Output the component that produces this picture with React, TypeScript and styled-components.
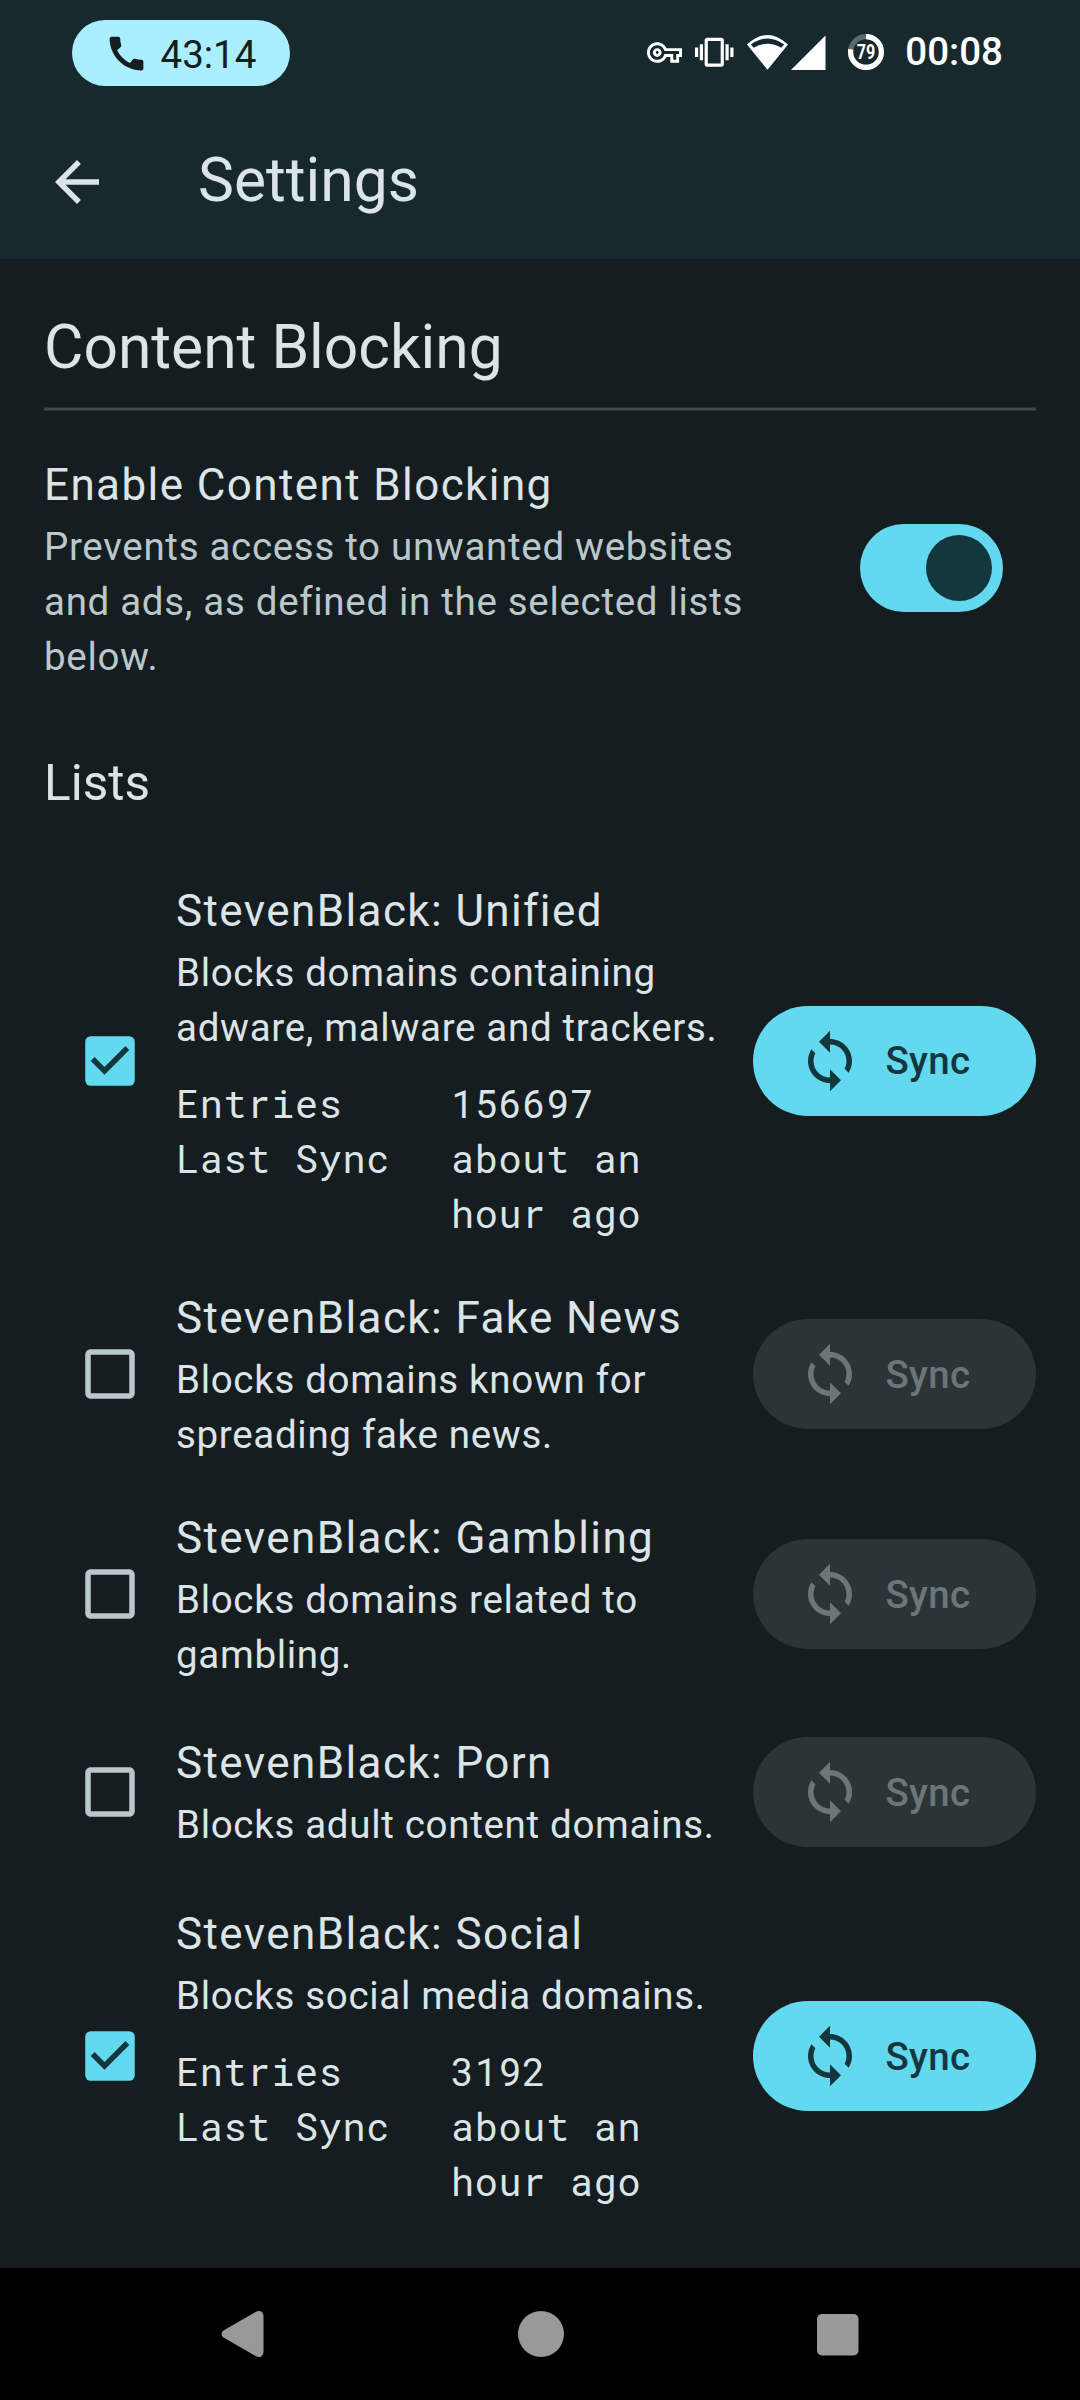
import React, { useState } from "react";
import styled, { createGlobalStyle } from "styled-components";

const color = {
  header: "#18292d",
  surface: "#161d20",
  text: "#dbe4e6",
  muted: "#bac8cb",
  divider: "#3f484a",
  dividerEdge: "#293234",
  primary: "#63d9f0",
  onPrimary: "#14363d",
  disabled: "#2c3437",
  onDisabled: "#6b7678",
  chip: "#a9efff",
  nav: "#999999",
};

const GlobalStyle = createGlobalStyle`
  * { box-sizing: border-box; }
  body { margin: 0; background: ${color.surface}; }
  button { font: inherit; border: 0; padding: 0; margin: 0; background: none; }
`;

const Screen = styled.div`
  display: flex;
  flex-direction: column;
  width: 1080px;
  height: 2400px;
  overflow: hidden;
  background: ${color.surface};
  color: ${color.text};
  font-family: Roboto, "Noto Sans", sans-serif;
`;

const StatusBar = styled.div`
  display: flex;
  align-items: center;
  justify-content: space-between;
  height: 106px;
  padding: 0 77px 0 72px;
  background: ${color.header};
`;

const CallChip = styled.div`
  display: flex;
  align-items: center;
  gap: 11.5px;
  width: 218px;
  height: 66px;
  padding-left: 32px;
  border-radius: 33px;
  background: ${color.chip};
  color: ${color.surface};
`;

const CallTime = styled.span`
  padding-top: 3px;
  font-size: 38.5px;
  line-height: 63px;
`;

const StatusIcons = styled.div`
  display: flex;
  align-items: center;
  color: #fff;
`;

const StatusGlyph = styled.svg<{ $gap: number; $lift?: number }>`
  flex: none;
  margin-right: ${(p) => p.$gap}px;
  margin-bottom: ${(p) => p.$lift ?? 0}px;
  overflow: visible;
`;

const Clock = styled.span`
  padding-bottom: 2px;
  font-size: 38.5px;
  font-weight: 500;
  line-height: 64px;
`;

const AppBar = styled.header`
  display: flex;
  align-items: center;
  gap: 88px;
  height: 153px;
  padding: 0 0 1px 44px;
  background: ${color.header};
`;

const AppTitle = styled.h1`
  margin: 0 0 3px;
  font-size: 60.5px;
  font-weight: 400;
  line-height: 77px;
`;

const Icon = styled.svg`
  flex: none;
  display: block;
  width: 66px;
  height: 66px;
  fill: currentColor;
`;

const PhoneIcon = styled(Icon)`
  width: 45px;
  height: 45px;
`;

const Content = styled.main`
  flex: 1;
  padding: 50px 44px 0;
`;

const SectionTitle = styled.h2`
  margin: 0;
  height: 98px;
  font-size: 60.5px;
  font-weight: 400;
  line-height: 77px;
`;

const Divider = styled.hr`
  height: 4px;
  margin: 0;
  border: solid ${color.dividerEdge};
  border-width: 1px 0;
  background: ${color.divider};
`;

const SettingRow = styled.div`
  display: flex;
  align-items: center;
  justify-content: space-between;
  height: 232px;
  margin-top: 41px;
  padding-right: 33px;
`;

const SettingText = styled.div`
  width: 720px;
`;

const ItemTitle = styled.div`
  font-size: 44px;
  line-height: 66px;
  letter-spacing: 1.4px;
`;

const ItemText = styled.div<{ $muted?: boolean }>`
  margin-top: 1px;
  font-size: 38.5px;
  line-height: 55px;
  letter-spacing: 0.6875px;
  color: ${(p) => (p.$muted ? color.muted : color.text)};
`;

const Switch = styled.button<{ $on: boolean }>`
  display: flex;
  align-items: center;
  justify-content: ${(p) => (p.$on ? "flex-end" : "flex-start")};
  width: 143px;
  height: 88px;
  padding: 0 11px;
  border-radius: 44px;
  background: ${(p) => (p.$on ? color.primary : color.disabled)};
`;

const SwitchThumb = styled.span`
  width: 66px;
  height: 66px;
  border-radius: 50%;
  background: ${color.onPrimary};
`;

const ListsTitle = styled.h3`
  margin: 66px 0 41px;
  font-size: 49.5px;
  font-weight: 400;
  line-height: 66px;
`;

const ListRow = styled.div`
  display: grid;
  grid-template-columns: 99px 1fr 283px;
  align-items: center;
  min-height: 176px;
  padding: 21.5px 0 21.5px 33px;
`;

const ListInfo = styled.div`
  margin: -1px 0 1px;
  padding-right: 22px;
`;

const CheckButton = styled.button<{ $checked: boolean }>`
  width: 66px;
  color: ${(p) => (p.$checked ? color.primary : color.muted)};
`;

const Stats = styled.dl`
  display: grid;
  grid-template-columns: 275px 1fr;
  margin: 21px 0 1px;
  font-family: "Roboto Mono", "DejaVu Sans Mono", monospace;
  font-size: 38.5px;
  line-height: 55px;
  letter-spacing: 0.6875px;
`;

const StatLabel = styled.dt`
  margin: 0;
`;

const StatValue = styled.dd`
  margin: 0;
`;

const SyncButton = styled.button<{ $enabled: boolean }>`
  display: flex;
  align-items: center;
  gap: 22.5px;
  width: 283px;
  height: 110px;
  padding-left: 44px;
  border-radius: 55px;
  background: ${(p) => (p.$enabled ? color.primary : color.disabled)};
  color: ${(p) => (p.$enabled ? color.onPrimary : color.onDisabled)};
  font-size: 38.5px;
  font-weight: 500;
  line-height: 55px;
  letter-spacing: 0.275px;
`;

const NavBar = styled.nav`
  display: flex;
  align-items: center;
  justify-content: space-between;
  height: 132px;
  padding: 0 219px 0 220px;
  background: #000;
`;

const NavGlyph = styled.svg`
  display: block;
  width: 46px;
  height: 48px;
  fill: ${color.nav};
`;

type BlockList = {
  name: string;
  description: string;
  enabled: boolean;
  entries?: number;
  lastSync?: string;
};

const initialLists: BlockList[] = [
  {
    name: "StevenBlack: Unified",
    description: "Blocks domains containing adware, malware and trackers.",
    enabled: true,
    entries: 156697,
    lastSync: "about an hour ago",
  },
  {
    name: "StevenBlack: Fake News",
    description: "Blocks domains known for spreading fake news.",
    enabled: false,
  },
  {
    name: "StevenBlack: Gambling",
    description: "Blocks domains related to gambling.",
    enabled: false,
  },
  {
    name: "StevenBlack: Porn",
    description: "Blocks adult content domains.",
    enabled: false,
  },
  {
    name: "StevenBlack: Social",
    description: "Blocks social media domains.",
    enabled: true,
    entries: 3192,
    lastSync: "about an hour ago",
  },
];

function SystemStatus() {
  return (
    <StatusBar>
      <CallChip>
        <PhoneIcon viewBox="0 0 24 24">
          <path d="M20.01 15.38c-1.23 0-2.42-.2-3.53-.56-.35-.12-.74-.03-1.01.24l-1.57 1.97c-2.83-1.35-5.48-3.9-6.89-6.83l1.95-1.66c.27-.28.35-.67.24-1.02-.37-1.11-.56-2.3-.56-3.53 0-.54-.45-.99-.99-.99H4.19C3.65 3 3 3.24 3 3.99 3 13.28 10.73 21 20.01 21c.71 0 .99-.63.99-1.18v-3.45c0-.54-.45-.99-.99-.99z" />
        </PhoneIcon>
        <CallTime>43:14</CallTime>
      </CallChip>
      <StatusIcons>
        <StatusGlyph $gap={13} $lift={1} width="35" height="35" viewBox="0 0 24 24" fill="#fff">
          <path d="M22 19h-6v-4h-2.68c-1.14 2.42-3.6 4-6.32 4-3.86 0-7-3.14-7-7s3.14-7 7-7c2.72 0 5.17 1.58 6.32 4H24v6h-2v4zm-4-2h2v-4h2v-2H11.94l-.23-.67C11.01 8.34 9.11 7 7 7c-2.76 0-5 2.24-5 5s2.24 5 5 5c2.11 0 4.01-1.34 4.71-3.33l.23-.67H18v4zM7 15c-1.65 0-3-1.35-3-3s1.35-3 3-3 3 1.35 3 3-1.35 3-3 3zm0-4c-.55 0-1 .45-1 1s.45 1 1 1 1-.45 1-1-.45-1-1-1z" />
        </StatusGlyph>
        <StatusGlyph $gap={13} $lift={1} width="38.5" height="38.5" viewBox="0 0 24 24" fill="#fff">
          <path d="M0 15h2V9H0v6zm3 2h2V7H3v10zm19-8v6h2V9h-2zm-3 8h2V7h-2v10zM16.5 3h-9C6.67 3 6 3.67 6 4.5v15c0 .83.67 1.5 1.5 1.5h9c.83 0 1.5-.67 1.5-1.5v-15c0-.83-.67-1.5-1.5-1.5zM16 19H8V5h8v14z" />
        </StatusGlyph>
        <StatusGlyph $gap={3.5} $lift={1} width="41" height="35" viewBox="0 0 41 35" fill="#fff">
          <path
            fillRule="evenodd"
            d="M0 9.5Q20.5 -9.5 41 9.5L20.5 34.7ZM3.8 9.4L6.8 12.8Q20.5 4.8 34.2 12.8L37.2 9.4Q20.5 -2.6 3.8 9.4Z"
          />
        </StatusGlyph>
        <StatusGlyph $gap={22.5} $lift={1} width="34.5" height="35" viewBox="0 0 34.5 35" fill="#fff">
          <path d="M34.5 .5V35H0Z" />
        </StatusGlyph>
        <StatusGlyph $gap={21} $lift={2} width="36" height="36" viewBox="0 0 36 36">
          <circle cx="18" cy="18" r="15.4" fill="none" stroke="#5d696c" strokeWidth="5.2" />
          <circle
            cx="18"
            cy="18"
            r="15.4"
            fill="none"
            stroke="#fff"
            strokeWidth="5.2"
            pathLength="100"
            strokeDasharray="78 22"
            transform="rotate(-90 18 18)"
          />
          <text
            x="18"
            y="25.2"
            textAnchor="middle"
            textLength="18.5"
            lengthAdjust="spacingAndGlyphs"
            fill="#fff"
            fontFamily="Roboto, sans-serif"
            fontSize="20"
            fontWeight="700"
          >
            79
          </text>
        </StatusGlyph>
        <Clock>00:08</Clock>
      </StatusIcons>
    </StatusBar>
  );
}

function Checkbox({ checked, onToggle }: { checked: boolean; onToggle: () => void }) {
  return (
    <CheckButton $checked={checked} role="checkbox" aria-checked={checked} onClick={onToggle}>
      <Icon viewBox="0 0 24 24">
        {checked ? (
          <>
            <rect x="3" y="3" width="18" height="18" rx="2" />
            <path d="M10 17l-5-5 1.41-1.41L10 14.17l7.59-7.59L19 8z" fill={color.onPrimary} />
          </>
        ) : (
          <path d="M19 5v14H5V5h14m0-2H5c-1.1 0-2 .9-2 2v14c0 1.1.9 2 2 2h14c1.1 0 2-.9 2-2V5c0-1.1-.9-2-2-2z" />
        )}
      </Icon>
    </CheckButton>
  );
}

export default function App() {
  const [blocking, setBlocking] = useState(true);
  const [lists, setLists] = useState(initialLists);

  const toggle = (name: string) =>
    setLists(lists.map((l) => (l.name === name ? { ...l, enabled: !l.enabled } : l)));

  return (
    <>
      <GlobalStyle />
      <Screen>
        <SystemStatus />
        <AppBar>
          <Icon viewBox="0 0 24 24">
            <path d="M20 11H7.83l5.59-5.59L12 4l-8 8 8 8 1.41-1.41L7.83 13H20v-2z" />
          </Icon>
          <AppTitle>Settings</AppTitle>
        </AppBar>
        <Content>
          <SectionTitle>Content Blocking</SectionTitle>
          <Divider />
          <SettingRow>
            <SettingText>
              <ItemTitle>Enable Content Blocking</ItemTitle>
              <ItemText $muted>
                Prevents access to unwanted websites and ads, as defined in the selected lists below.
              </ItemText>
            </SettingText>
            <Switch $on={blocking} role="switch" aria-checked={blocking} onClick={() => setBlocking(!blocking)}>
              <SwitchThumb />
            </Switch>
          </SettingRow>
          <ListsTitle>Lists</ListsTitle>
          {lists.map((list) => (
            <ListRow key={list.name}>
              <Checkbox checked={list.enabled} onToggle={() => toggle(list.name)} />
              <ListInfo>
                <ItemTitle>{list.name}</ItemTitle>
                <ItemText>{list.description}</ItemText>
                {list.entries !== undefined && (
                  <Stats>
                    <StatLabel>Entries</StatLabel>
                    <StatValue>{list.entries}</StatValue>
                    <StatLabel>Last Sync</StatLabel>
                    <StatValue>{list.lastSync}</StatValue>
                  </Stats>
                )}
              </ListInfo>
              <SyncButton $enabled={list.enabled} disabled={!list.enabled}>
                <Icon viewBox="0 0 24 24">
                  <path d="M12 4V1L8 5l4 4V6c3.31 0 6 2.69 6 6 0 1.01-.25 1.97-.7 2.8l1.46 1.46C19.54 15.03 20 13.57 20 12c0-4.42-3.58-8-8-8zm0 14c-3.31 0-6-2.69-6-6 0-1.01.25-1.97.7-2.8L5.24 7.74C4.46 8.97 4 10.43 4 12c0 4.42 3.58 8 8 8v3l4-4-4-4v3z" />
                </Icon>
                Sync
              </SyncButton>
            </ListRow>
          ))}
        </Content>
        <NavBar>
          <NavGlyph viewBox="0 0 46 48">
            <path d="M3.5 20.5L36 1.8C40 -.4 43.5 2 43.5 6.5V41.5C43.5 46 40 48.4 36 46.2L3.5 27.5C1 26 1 22 3.5 20.5Z" />
          </NavGlyph>
          <NavGlyph viewBox="0 0 46 48">
            <circle cx="23" cy="24" r="23" />
          </NavGlyph>
          <NavGlyph viewBox="0 0 46 48">
            <rect x="2" y="4" width="41.5" height="41.5" rx="5" />
          </NavGlyph>
        </NavBar>
      </Screen>
    </>
  );
}
